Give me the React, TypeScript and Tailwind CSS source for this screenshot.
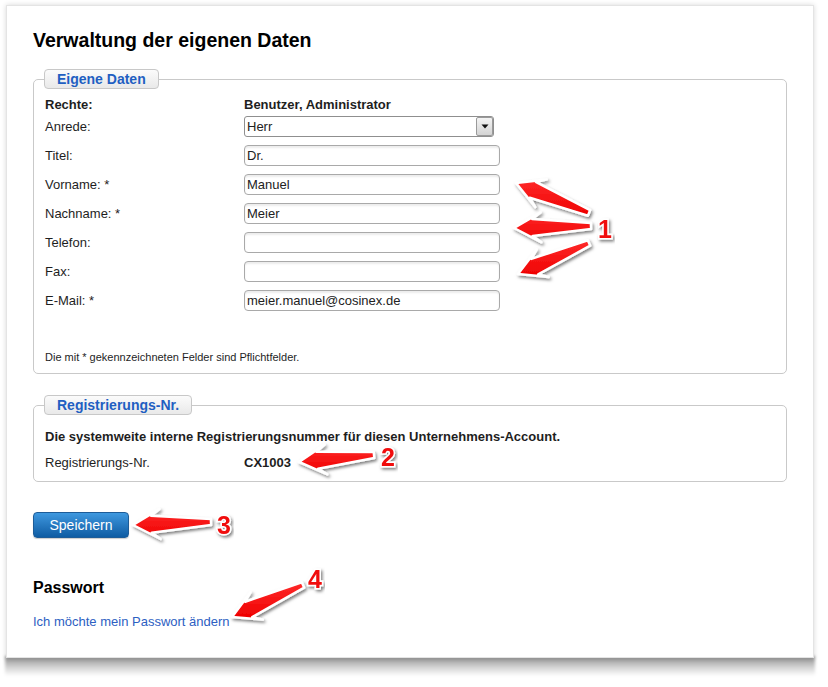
import React from 'react';

type Pt = [number, number];

// Skitch-like arrow: big swept head at the tip, shaft tapering to the tail
function arrowPoints(tip: Pt, tail: Pt, hl = 27, hw = 15, sw = 8.5, tw = 3) {
  const [tx, ty] = tip;
  const dx = tail[0] - tx;
  const dy = tail[1] - ty;
  const len = Math.hypot(dx, dy);
  const ux = dx / len;
  const uy = dy / len;
  const nx = -uy;
  const ny = ux;
  const p = (a: number, b: number) => `${(tx + ux * a + nx * b).toFixed(1)},${(ty + uy * a + ny * b).toFixed(1)}`;
  return [p(0, 0), p(hl, -hw), p(hl * 0.68, -sw), p(len, -tw), p(len, tw), p(hl * 0.68, sw), p(hl, hw)].join(' ');
}

const arrows: { tip: Pt; tail: Pt }[] = [
  { tip: [516, 183], tail: [589, 213] },
  { tip: [514, 228], tail: [591, 226] },
  { tip: [518, 274], tail: [589, 243] },
  { tip: [299, 462], tail: [374, 455] },
  { tip: [133, 525], tail: [211, 522] },
  { tip: [232, 617], tail: [303, 585] },
];

const numbers = [
  { n: '1', x: 605, y: 238 },
  { n: '2', x: 388, y: 466 },
  { n: '3', x: 224, y: 534 },
  { n: '4', x: 315, y: 588 },
];

function Field({ label, value }: { label: string; value?: string }) {
  return (
    <div className="flex h-[29px] items-center">
      <div className="w-[199px] text-[13px] leading-[15px] text-[#1e1e1e]">{label}</div>
      <div className="flex h-[21px] w-[256px] items-center rounded-[4px] border border-[#a9a9a9] bg-white pl-[2px] text-[13px] text-[#222] shadow-[inset_0_2px_2px_rgba(0,0,0,0.08)]">
        {value}
      </div>
    </div>
  );
}

function Legend({ children }: { children: React.ReactNode }) {
  return (
    <legend className="h-[20px] rounded-[4px] border border-[#c8c8c8] bg-gradient-to-b from-[#fbfbfb] to-[#e9e9e9] px-[12px] text-[14px] font-bold leading-[18px] text-[#1f5fc2]">
      {children}
    </legend>
  );
}

export default function App() {
  return (
    <div className="relative h-[687px] w-[828px] overflow-hidden bg-white font-['Liberation_Sans',Arial,sans-serif]">
      {/* paper shadow under the card */}
      <div className="absolute left-[5px] top-[656px] h-[20px] w-[810px] bg-gradient-to-b from-black/45 via-black/20 to-black/0 blur-[1.5px]" />

      <div className="relative ml-[6px] mt-[5px] h-[653px] w-[808px] border border-[#e4e4e4] bg-white px-[26px] pt-[23px] shadow-[0_0_5px_rgba(0,0,0,0.16)]">
        <h1 className="text-[19.5px] font-bold leading-[23px] text-black">Verwaltung der eigenen Daten</h1>

        <fieldset className="mt-[17px] rounded-[5px] border border-[#c9c9c9] px-[10px] pb-[9px]">
          <Legend>Eigene Daten</Legend>
          <div className="pl-[1px] pt-[9px]">
            <div className="flex h-[14px] items-center text-[13px] font-bold leading-[14px] text-[#1e1e1e]">
              <div className="w-[199px]">Rechte:</div>
              <div>Benutzer, Administrator</div>
            </div>
            <div className="flex h-[29px] items-center">
              <div className="w-[199px] text-[13px] leading-[15px] text-[#1e1e1e]">Anrede:</div>
              <div className="flex h-[21px] w-[250px] items-center justify-between rounded-[3px] border border-[#8f8f8f] bg-white pl-[2px] text-[13px] text-[#222]">
                <span>Herr</span>
                <span className="flex h-[19px] w-[17px] items-center justify-center rounded-[2px] border border-[#9a9a9a] bg-gradient-to-b from-[#f4f4f4] to-[#d4d4d4]">
                  <svg width="8" height="5" viewBox="0 0 8 5">
                    <path d="M0.5 0.5 H7.5 L4 4.5 Z" fill="#111" />
                  </svg>
                </span>
              </div>
            </div>
            <Field label="Titel:" value="Dr." />
            <Field label="Vorname: *" value="Manuel" />
            <Field label="Nachname: *" value="Meier" />
            <Field label="Telefon:" />
            <Field label="Fax:" />
            <Field label="E-Mail: *" value="meier.manuel@cosinex.de" />
            <p className="mt-[36px] text-[11px] leading-[13px] text-[#1e1e1e]">
              Die mit * gekennzeichneten Felder sind Pflichtfelder.
            </p>
          </div>
        </fieldset>

        <fieldset className="mt-[21px] rounded-[5px] border border-[#c9c9c9] px-[10px] pb-[10px]">
          <Legend>Registrierungs-Nr.</Legend>
          <div className="pl-[1px] pt-[14px] text-[13px] leading-[16px] text-[#1e1e1e]">
            <p className="font-bold">Die systemweite interne Registrierungsnummer für diesen Unternehmens-Account.</p>
            <div className="mt-[10px] flex">
              <div className="w-[199px]">Registrierungs-Nr.</div>
              <div className="font-bold">CX1003</div>
            </div>
          </div>
        </fieldset>

        <button className="mt-[30px] block h-[26px] w-[96px] rounded-[4px] border border-[#1d5c98] bg-gradient-to-b from-[#3e98df] to-[#0d5ca3] text-[14px] leading-[24px] text-white shadow-[0_1px_1px_rgba(0,0,0,0.2)]">
          Speichern
        </button>

        <h2 className="mt-[40px] text-[16px] font-bold leading-[20px] text-black">Passwort</h2>
        <a href="#" className="mt-[16px] block text-[13px] leading-[16px] text-[#2d60c2]">
          Ich möchte mein Passwort ändern
        </a>
      </div>

      {/* annotation overlay */}
      <svg className="pointer-events-none absolute left-0 top-0 z-20" width="828" height="687" viewBox="0 0 828 687">
        <defs>
          <filter id="sh" x="-20%" y="-20%" width="140%" height="160%">
            <feDropShadow dx="1.5" dy="2" stdDeviation="1.5" floodColor="#000" floodOpacity="0.5" />
          </filter>
          <linearGradient id="red" x1="0" y1="0" x2="0" y2="1">
            <stop offset="0" stopColor="#ff2a2a" />
            <stop offset="1" stopColor="#ee0000" />
          </linearGradient>
        </defs>
        {arrows.map((a, i) => (
          <polygon
            key={i}
            points={arrowPoints(a.tip, a.tail)}
            fill="url(#red)"
            stroke="#fff"
            strokeWidth="2.5"
            strokeLinejoin="round"
            filter="url(#sh)"
          />
        ))}
        {numbers.map((n) => (
          <text
            key={n.n}
            x={n.x}
            y={n.y}
            textAnchor="middle"
            fontFamily="'Liberation Sans', Arial, sans-serif"
            fontWeight="bold"
            fontSize="25"
            fill="#f01010"
            stroke="#fff"
            strokeWidth="3"
            paintOrder="stroke"
            filter="url(#sh)"
          >
            {n.n}
          </text>
        ))}
      </svg>
    </div>
  );
}
